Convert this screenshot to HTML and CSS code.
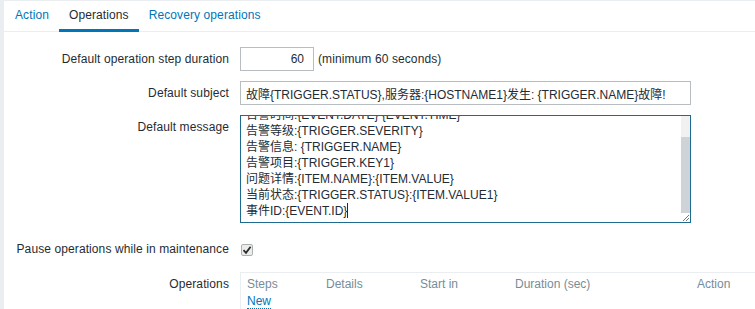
FILE: index.html
```html
<!DOCTYPE html>
<html>

<head>
    <meta charset="UTF-8">
    <title>Action - Operations</title>
    <link rel="stylesheet" href="styles.css">
</head>

<body>
    <div class="page">
        <ul class="tabs">
            <li class="tab"><a href="#">Action</a></li>
            <li class="tab active">Operations</li>
            <li class="tab"><a href="#">Recovery operations</a></li>
        </ul>

        <div class="form">
            <div class="row">
                <label class="label" for="escPeriod">Default operation step duration</label>
                <div class="field">
                    <input type="text" id="escPeriod" class="input input-short" value="60">
                    <span class="hint">(minimum 60 seconds)</span>
                </div>
            </div>

            <div class="row">
                <label class="label" for="subject">Default subject</label>
                <div class="field">
                    <input type="text" id="subject" class="input input-wide" value="故障{TRIGGER.STATUS},服务器:{HOSTNAME1}发生: {TRIGGER.NAME}故障!">
                </div>
            </div>

            <div class="row row-message">
                <label class="label">Default message</label>
                <div class="field">
                    <div class="textarea">
                        <div class="textarea-text">
                            <div>告警时间:{EVENT.DATE} {EVENT.TIME}</div>
                            <div>告警等级:{TRIGGER.SEVERITY}</div>
                            <div>告警信息: {TRIGGER.NAME}</div>
                            <div>告警项目:{TRIGGER.KEY1}</div>
                            <div>问题详情:{ITEM.NAME}:{ITEM.VALUE}</div>
                            <div>当前状态:{TRIGGER.STATUS}:{ITEM.VALUE1}</div>
                            <div>事件ID:{EVENT.ID}<span class="caret"></span></div>
                        </div>
                        <div class="scrollbar">
                            <div class="scroll-track"></div>
                            <div class="scroll-thumb"></div>
                            <div class="resizer">
                                <svg width="9" height="9" viewBox="0 0 9 9">
                                    <path d="M8 2 L2 8 M8 5 L5 8" stroke="#777" stroke-width="1" fill="none" />
                                </svg>
                            </div>
                        </div>
                    </div>
                </div>
            </div>

            <div class="row row-pause">
                <label class="label">Pause operations while in maintenance</label>
                <div class="field">
                    <span class="checkbox">
                        <svg width="10" height="10" viewBox="0 0 10 10">
                            <path d="M1.5 5.2 L4 7.8 L8.6 1.8" stroke="#2b2b2b" stroke-width="1.8" fill="none" />
                        </svg>
                    </span>
                </div>
            </div>

            <div class="row">
                <label class="label">Operations</label>
                <div class="field">
                    <div class="ops-table">
                        <div class="ops-head">
                            <span class="col col-steps">Steps</span>
                            <span class="col col-details">Details</span>
                            <span class="col col-start">Start in</span>
                            <span class="col col-duration">Duration (sec)</span>
                            <span class="col">Action</span>
                        </div>
                        <div class="ops-row">
                            <a href="#" class="link-new">New</a>
                        </div>
                    </div>
                </div>
            </div>
        </div>
    </div>
</body>

</html>
```

FILE: styles.css
```css
body {
    margin: 0;
    padding: 1px 0 0 4px;
    background-color: #ebeef0;
    color: #1f2c33;
    font-family: 'Liberation Sans', Arial, 'Noto Sans CJK SC', sans-serif;
    font-size: 12px;
    overflow: hidden;
}

.page {
    background: #fff;
    min-height: 308px;
}

.tabs {
    display: flex;
    list-style: none;
    margin: 0;
    padding: 0 0 0 1px;
    border-bottom: 1px solid #ebeef0;
    height: 30px;
    letter-spacing: 0.1px;
}

.tab {
    padding: 0 10px;
    line-height: 28px;
    height: 28px;
    border-bottom: 3px solid transparent;
}

.tab a {
    color: #0275b8;
    text-decoration: none;
}

.tab.active {
    border-bottom-color: #0275b8;
    color: #1f2c33;
}

.form {
    padding-top: 15px;
}

.row {
    display: grid;
    grid-template-columns: 225px 1fr;
    column-gap: 11px;
    margin-bottom: 10px;
}

.row-message {
    margin-bottom: 14px;
}

.label {
    text-align: right;
    line-height: 24px;
    letter-spacing: 0.1px;
}

.field {
    display: flex;
    align-items: center;
    min-height: 24px;
}

.input {
    box-sizing: border-box;
    height: 24px;
    border: 1px solid #b7bdc1;
    padding: 0 5px;
    margin: 0;
    font: inherit;
    color: #1f2c33;
    background: #fff;
    outline: none;
}

.input-short {
    width: 74px;
    text-align: right;
    padding-right: 9px;
}

.input-wide {
    width: 451px;
}

.hint {
    margin-left: 4px;
    letter-spacing: 0.1px;
}

.textarea {
    box-sizing: border-box;
    width: 451px;
    height: 108px;
    border: 1px solid #1e6b92;
    display: flex;
    overflow: hidden;
}

.textarea-text {
    flex: 1;
    padding-left: 5px;
    margin-top: -9px;
    line-height: 16px;
}

.caret {
    display: inline-block;
    width: 1px;
    height: 15px;
    background: #1f2c33;
    vertical-align: -3px;
}

.scrollbar {
    width: 9px;
    display: flex;
    flex-direction: column;
}

.scroll-track {
    height: 21px;
    background: #f1f1f1;
}

.scroll-thumb {
    flex: 1;
    background: #cdd3d7;
}

.resizer {
    height: 9px;
    background: #fff;
    display: flex;
}

.row-pause .label,
.row-pause .field {
    line-height: 24px;
}

.checkbox {
    box-sizing: border-box;
    width: 12px;
    height: 12px;
    margin-left: 1px;
    border: 1px solid #a9b0b4;
    border-radius: 2px;
    background: #ececec;
    display: flex;
    align-items: center;
    justify-content: center;
}

.row-pause .field {
    padding-top: 1px;
}

.ops-table {
    flex: 1;
    align-self: flex-start;
    border-top: 1px solid #ebeef0;
    border-left: 1px solid #ebeef0;
    height: 40px;
}

.ops-head {
    display: flex;
    padding: 4px 6px 3px;
    line-height: 14px;
    color: #768d99;
}

.col-steps {
    width: 79px;
}

.col-details {
    width: 94px;
}

.col-start {
    width: 95px;
}

.col-duration {
    width: 182px;
}

.ops-row {
    padding: 0 6px;
    line-height: 14px;
}

.link-new {
    color: #0275b8;
    text-decoration: none;
    border-bottom: 1px dotted #0275b8;
}
```
